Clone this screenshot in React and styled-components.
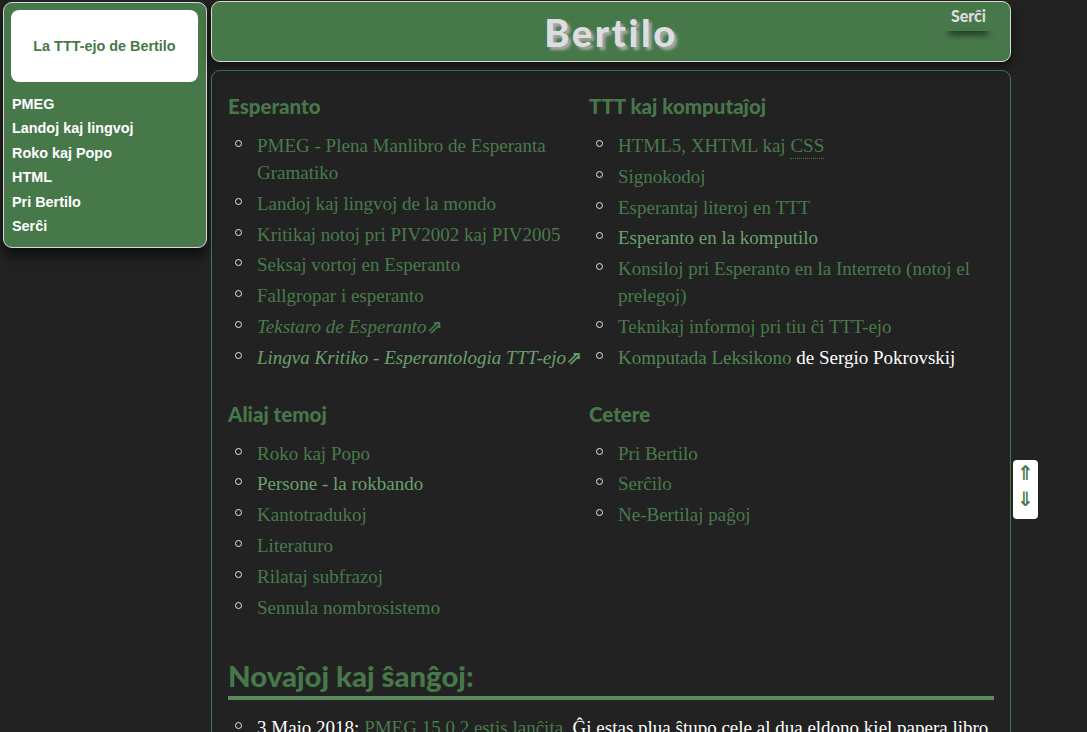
import React from "react";
import styled, { createGlobalStyle } from "styled-components";

const green = "#47784a";
const linkGreen = "#487b4b";
const hoverGreen = "#6aa06d";

const GlobalStyle = createGlobalStyle`
  html, body {
    margin: 0;
    padding: 0;
    height: 732px;
    overflow: hidden;
    background: #222222;
    color: #ffffff;
    font-family: "Liberation Serif", serif;
  }
`;

const Page = styled.div`
  display: flex;
  align-items: flex-start;
  gap: 4px;
  padding: 1px 0 0 3px;
  height: 732px;
  overflow: hidden;
  box-sizing: border-box;
`;

const Sidebar = styled.nav`
  flex: 0 0 204px;
  box-sizing: border-box;
  height: 246px;
  margin-top: 1px;
  padding: 7px 8px 7px 7px;
  background: ${green};
  border: 1px solid #d8d8d8;
  border-radius: 9px;
  box-shadow: 0 8px 12px rgba(0, 0, 0, 0.6);
`;

const Logo = styled.div`
  display: flex;
  align-items: center;
  justify-content: center;
  height: 72px;
  margin-bottom: 10px;
  background: #ffffff;
  border-radius: 8px;
  color: ${green};
  font: bold 14.4px "Liberation Sans", sans-serif;
`;

const NavLink = styled.a`
  display: block;
  height: 24.4px;
  padding-left: 1px;
  color: #ffffff;
  font: bold 14.4px/24.4px "Liberation Sans", sans-serif;
`;

const Main = styled.div`
  flex: 0 0 800px;
  display: flex;
  flex-direction: column;
  gap: 8px;
`;

const Header = styled.header`
  position: relative;
  box-sizing: border-box;
  height: 61px;
  background: ${green};
  border: 1px solid #d8d8d8;
  border-radius: 9px;
  box-shadow: 0 5px 10px rgba(0, 0, 0, 0.5);
  text-align: center;
`;

const Title = styled.h1`
  margin: 0;
  color: #dddddd;
  font: 900 38px/60px Lato, sans-serif;
  letter-spacing: 2.6px;
  text-shadow: 3px 3px 3px #aaaaaa;
`;

const SearchLink = styled.a`
  position: absolute;
  top: 5px;
  right: 16px;
  padding: 0 8px 6px;
  color: #dddddd;
  font: 900 16px/18px Lato, sans-serif;
  box-shadow: 0 10px 6px -6px #263a27;
`;

const Content = styled.main`
  box-sizing: border-box;
  min-height: 700px;
  padding: 16px;
  border: 1px solid ${green};
  border-radius: 9px;
`;

const Columns = styled.div`
  display: grid;
  grid-template-columns: 361px 405px;
  row-gap: 20px;
`;

const SectionTitle = styled.h2`
  margin: -1px 0 6px;
  color: ${green};
  font: 900 20.5px/40px Lato, sans-serif;
`;

const List = styled.ul`
  margin: 0;
  padding: 0 0 0 29px;
  list-style: none;
  font-size: 19px;
  line-height: 27px;
`;

const Item = styled.li`
  position: relative;
  margin-bottom: 3.8px;

  &::before {
    content: "";
    position: absolute;
    left: -22px;
    top: 8px;
    width: 5px;
    height: 5px;
    border: 1.5px solid #e8e8e8;
    border-radius: 50%;
  }
`;

const NewsItem = styled(Item)`
  white-space: nowrap;
`;

const ItemLink = styled.a`
  color: ${(p) => p.$color || linkGreen};
`;

const ExternalLink = styled(ItemLink)`
  font-style: italic;

  &::after {
    content: "⇗";
    font: bold 19px "DejaVu Sans", sans-serif;
  }
`;

const Abbr = styled.span`
  padding-bottom: 2px;
  border-bottom: 1px dotted ${green};
`;

const NewsTitle = styled.h2`
  margin: 32px 0 14px;
  padding-bottom: 1px;
  border-bottom: 4px solid #5b8a5d;
  color: ${green};
  font: 900 29.3px/39px Lato, sans-serif;
`;

const JumpBox = styled.div`
  position: absolute;
  top: 460px;
  left: 1013px;
  display: flex;
  flex-direction: column;
  align-items: center;
  width: 25px;
  height: 59px;
  background: #ffffff;
  border-radius: 4px;
`;

const JumpArrow = styled.a`
  color: ${green};
  font: bold 20px/26px "DejaVu Sans", sans-serif;
`;

const NAV = ["PMEG", "Landoj kaj lingvoj", "Roko kaj Popo", "HTML", "Pri Bertilo", "Serĉi"];

export default function App() {
  return (
    <Page>
      <GlobalStyle />
      <Sidebar>
        <Logo>La TTT-ejo de Bertilo</Logo>
        {NAV.map((n) => (
          <NavLink key={n}>{n}</NavLink>
        ))}
      </Sidebar>
      <Main>
        <Header>
          <Title>Bertilo</Title>
          <SearchLink>Serĉi</SearchLink>
        </Header>
        <Content>
          <Columns>
            <section>
              <SectionTitle>Esperanto</SectionTitle>
              <List>
                <Item><ItemLink>PMEG - Plena Manlibro de Esperanta Gramatiko</ItemLink></Item>
                <Item><ItemLink>Landoj kaj lingvoj de la mondo</ItemLink></Item>
                <Item><ItemLink>Kritikaj notoj pri PIV2002 kaj PIV2005</ItemLink></Item>
                <Item><ItemLink>Seksaj vortoj en Esperanto</ItemLink></Item>
                <Item><ItemLink>Fallgropar i esperanto</ItemLink></Item>
                <Item><ExternalLink>Tekstaro de Esperanto</ExternalLink></Item>
                <Item><ExternalLink $color={hoverGreen}>Lingva Kritiko - Esperantologia TTT-ejo</ExternalLink></Item>
              </List>
            </section>
            <section>
              <SectionTitle>TTT kaj komputaĵoj</SectionTitle>
              <List>
                <Item><ItemLink>HTML5, XHTML kaj <Abbr>CSS</Abbr></ItemLink></Item>
                <Item><ItemLink>Signokodoj</ItemLink></Item>
                <Item><ItemLink>Esperantaj literoj en TTT</ItemLink></Item>
                <Item><ItemLink $color={hoverGreen}>Esperanto en la komputilo</ItemLink></Item>
                <Item><ItemLink>Konsiloj pri Esperanto en la Interreto (notoj el prelegoj)</ItemLink></Item>
                <Item><ItemLink>Teknikaj informoj pri tiu ĉi TTT-ejo</ItemLink></Item>
                <Item><ItemLink $color="#4f8752">Komputada Leksikono</ItemLink> de Sergio Pokrovskij</Item>
              </List>
            </section>
            <section>
              <SectionTitle>Aliaj temoj</SectionTitle>
              <List>
                <Item><ItemLink>Roko kaj Popo</ItemLink></Item>
                <Item><ItemLink $color={hoverGreen}>Persone - la rokbando</ItemLink></Item>
                <Item><ItemLink>Kantotradukoj</ItemLink></Item>
                <Item><ItemLink>Literaturo</ItemLink></Item>
                <Item><ItemLink>Rilataj subfrazoj</ItemLink></Item>
                <Item><ItemLink>Sennula nombrosistemo</ItemLink></Item>
              </List>
            </section>
            <section>
              <SectionTitle>Cetere</SectionTitle>
              <List>
                <Item><ItemLink>Pri Bertilo</ItemLink></Item>
                <Item><ItemLink>Serĉilo</ItemLink></Item>
                <Item><ItemLink>Ne-Bertilaj paĝoj</ItemLink></Item>
              </List>
            </section>
          </Columns>
          <NewsTitle>Novaĵoj kaj ŝanĝoj:</NewsTitle>
          <List>
            <NewsItem>3 Majo 2018: <ItemLink>PMEG 15.0.2 estis lanĉita.</ItemLink> Ĝi estas plua ŝtupo cele al dua eldono kiel papera libro</NewsItem>
          </List>
        </Content>
      </Main>
      <JumpBox>
        <JumpArrow>⇑</JumpArrow>
        <JumpArrow>⇓</JumpArrow>
      </JumpBox>
    </Page>
  );
}
